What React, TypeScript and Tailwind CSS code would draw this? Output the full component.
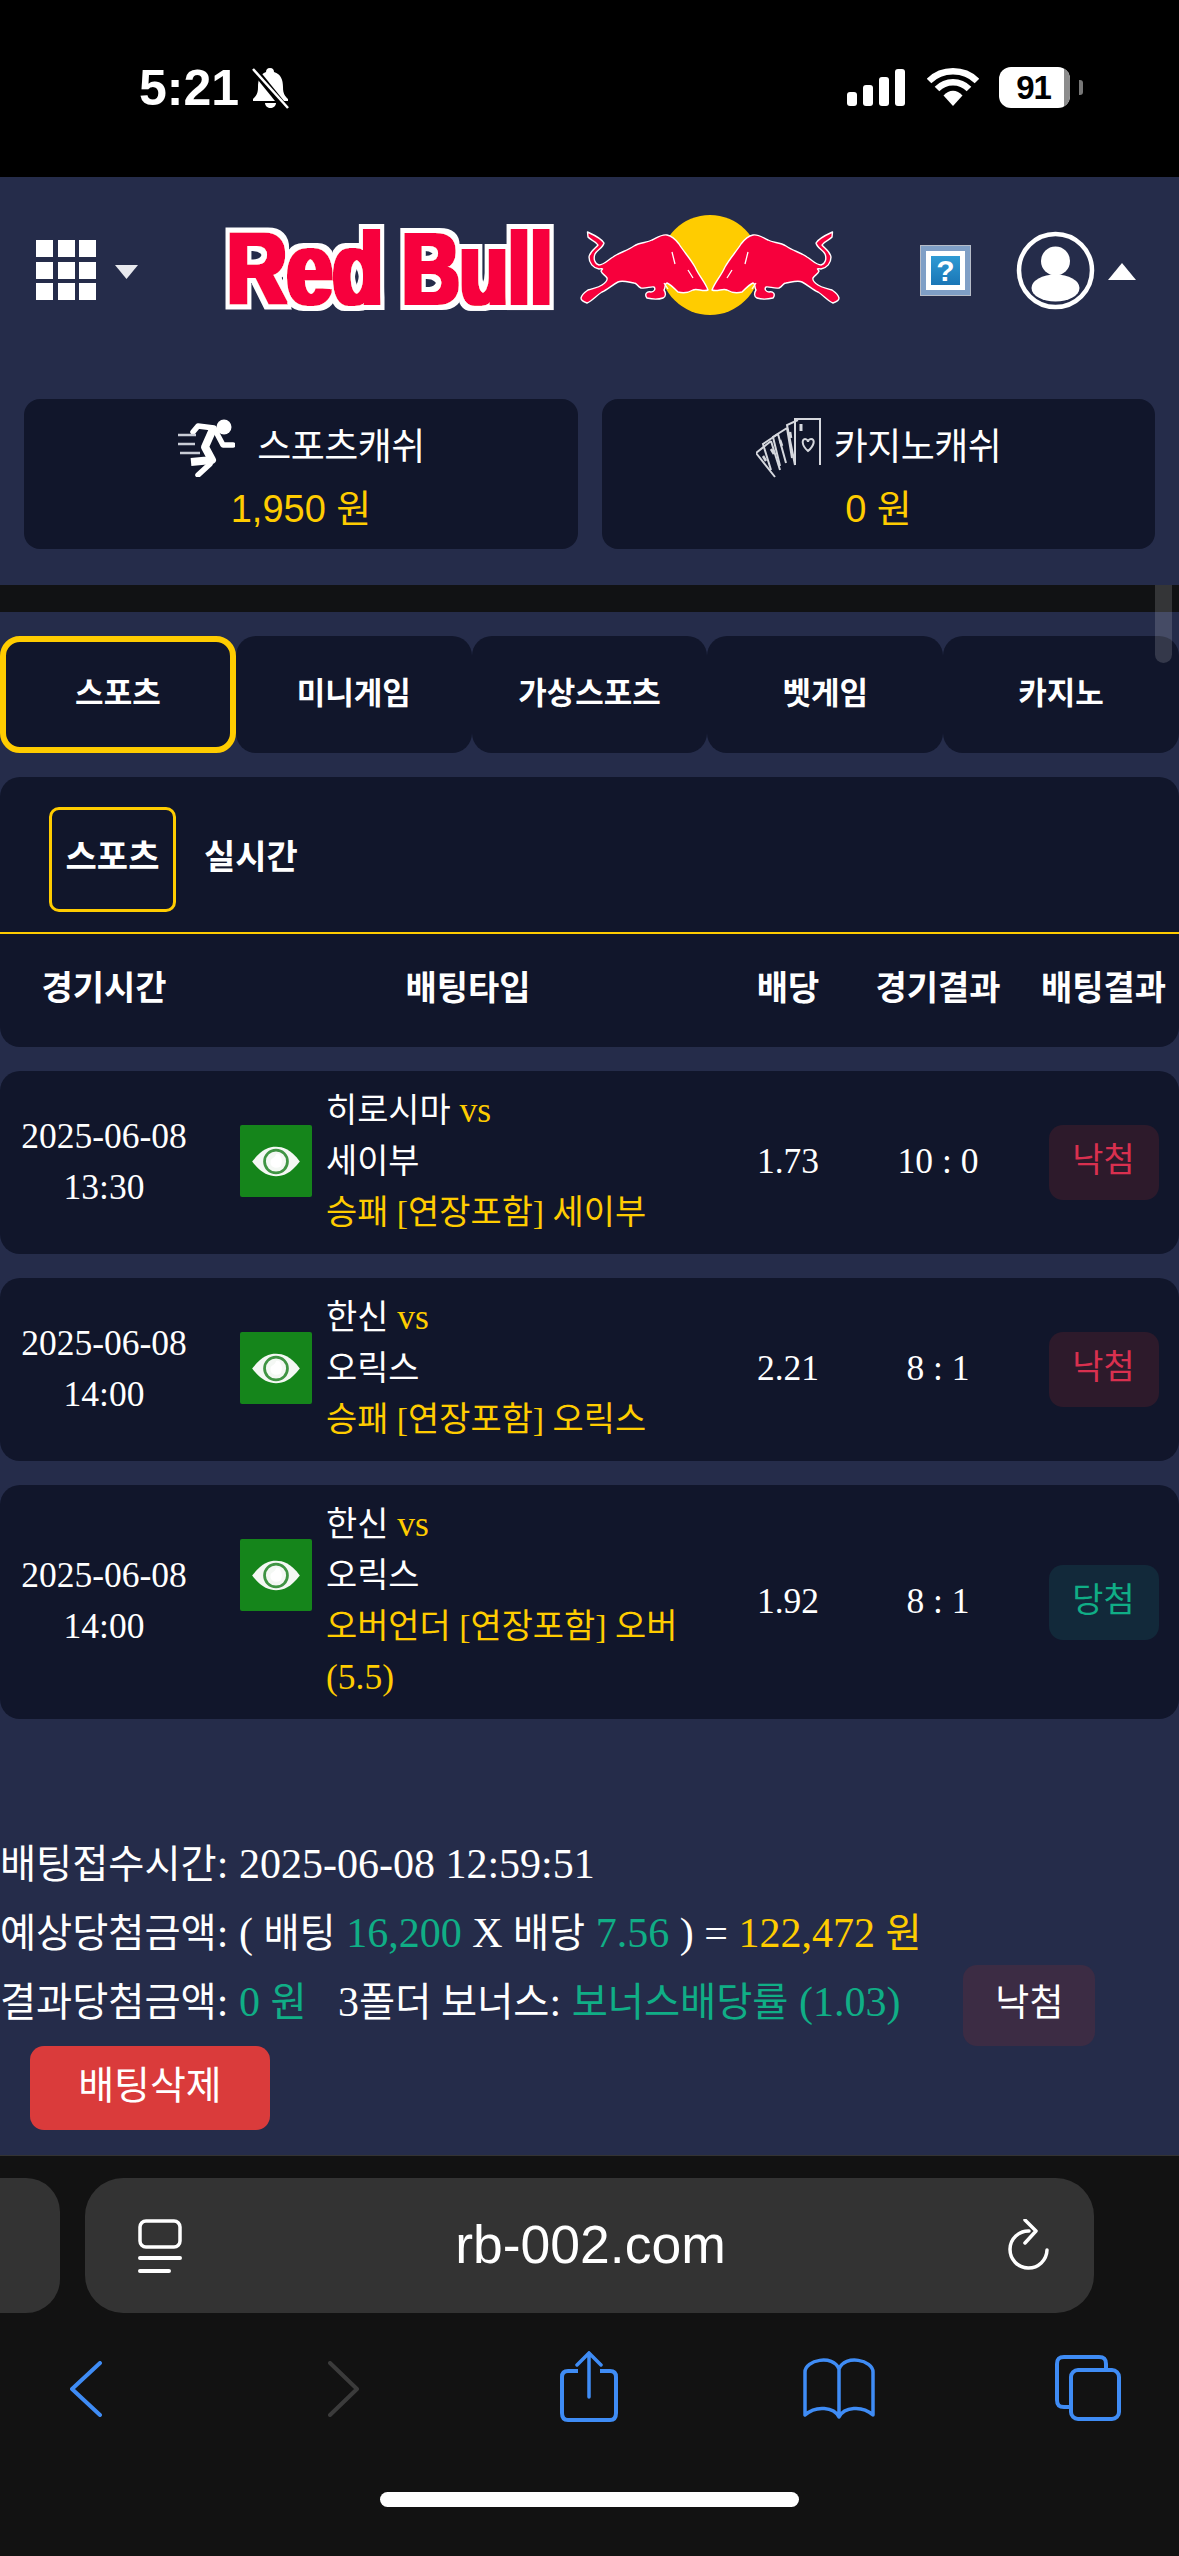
import React from "react";

const K = ({ children }: { children: React.ReactNode }) => <span className="text-[0.955em]">{children}</span>;
const KS = ({ children }: { children: React.ReactNode }) => <span className="text-[0.935em]">{children}</span>;

const Green = ({ children }: { children: React.ReactNode }) => <span className="text-[#10ae86]">{children}</span>;
const Yellow = ({ children }: { children: React.ReactNode }) => <span className="text-[#ffcc00]">{children}</span>;

const BULL =
  "M587.5 232 C594 235 601 238 604 243 C603 248 597 250 595 254 C593 259 595 264 599 265 C604 265 608 260 613 257 C620 252 627 251 634 246 C640 242 647 243 652 240 C658 237 662 234 667 235 C672 236 676 240 679 244 C684 252 690 258 695 267 C699 276 705 282 708 290 C703 292 697 288 693 290 C688 293 682 293 678 292 C674 288 670 284 667 283 C664 284 666 287 664 290 C666 293 666 297 663 298 C657 300 651 299 647 298 C644 294 647 291 651 292 C654 292 656 289 654 287 C651 286 646 289 641 288 C637 286 637 283 634 283 C628 282 622 280 618 282 C612 285 607 290 602 292 C597 295 592 301 587 303 C584 302 581 300 581 298 C582 294 585 292 588 290 C593 288 598 288 602 285 C605 283 608 281 607 278 C605 275 602 274 601 271 C603 269 604 268 599 269 C593 268 589 263 589 257 C590 251 596 248 598 245 C596 241 590 240 588 237 Z";

function Logo() {
  return (
    <svg width="620" height="110" viewBox="225 210 620 110" className="shrink-0 overflow-visible">
      <defs>
        <filter id="rb" x="-5%" y="-15%" width="110%" height="130%">
          <feMorphology in="SourceGraphic" operator="dilate" radius="2.5 1" result="red" />
          <feMorphology in="SourceAlpha" operator="dilate" radius="6.5 5.5" result="wa" />
          <feFlood floodColor="#ffffff" />
          <feComposite in2="wa" operator="in" result="white" />
          <feMerge>
            <feMergeNode in="white" />
            <feMergeNode in="red" />
          </feMerge>
        </filter>
      </defs>
      <g filter="url(#rb)" fill="#f7003c" fontFamily="'Liberation Sans', sans-serif" fontWeight="700" fontSize="102">
        <text transform="translate(227 304) scale(0.81 1)">Red</text>
        <text transform="translate(402 304) scale(0.78 1)">Bull</text>
      </g>
      <circle cx="710" cy="265" r="50" fill="#ffcc00" />
      <path d={BULL} fill="#f7003c" stroke="#ffffff" strokeWidth="1.4" strokeLinejoin="round" />
      <path d={BULL} fill="#f7003c" stroke="#ffffff" strokeWidth="1.4" strokeLinejoin="round" transform="translate(1420 0) scale(-1 1)" />
      <path d="M672 252 l3 12 M693 278 l-5 -8 M664 283 l4 6" stroke="#ffffff" strokeWidth="1.3" fill="none" />
      <path d="M748 252 l-3 12 M727 278 l5 -8 M756 283 l-4 6" stroke="#ffffff" strokeWidth="1.3" fill="none" />
    </svg>
  );
}

function EyeBadge() {
  return (
    <div className="w-[72px] h-[72px] bg-[#15851b] rounded-[2px] flex items-center justify-center">
      <svg width="52" height="33" viewBox="0 0 56 36">
        <path d="M2 18 C12 5 20 2 28 2 C36 2 44 5 54 18 C44 31 36 34 28 34 C20 34 12 31 2 18 Z" fill="#f4f8f4" />
        <circle cx="28" cy="18" r="12.5" fill="none" stroke="#3f9443" strokeWidth="3" />
        <path d="M22 19 C22 13 26 16 28 10 C30 9 33 10 33 13 C35 15 35 22 32 24 C28 26 22 24 22 19 Z" fill="#ffffff" />
      </svg>
    </div>
  );
}

type Row = { date: string; time: string; a: string; b: string; bet: React.ReactNode; odd: string; score: string; win: boolean };

const rows: Row[] = [
  { date: "2025-06-08", time: "13:30", a: "히로시마", b: "세이부", bet: "승패 [연장포함] 세이부", odd: "1.73", score: "10 : 0", win: false },
  { date: "2025-06-08", time: "14:00", a: "한신", b: "오릭스", bet: "승패 [연장포함] 오릭스", odd: "2.21", score: "8 : 1", win: false },
  { date: "2025-06-08", time: "14:00", a: "한신", b: "오릭스", bet: "오버언더 [연장포함] 오버", odd: "1.92", score: "8 : 1", win: true },
];

const cols = "grid grid-cols-[208px_118px_402px_120px_180px_151px]";

function Sportsicon() {
  return (
    <svg width="58" height="58" viewBox="180 418 58 58" className="shrink-0">
      <circle cx="227" cy="426" r="7.5" fill="#fff" />
      <path d="M196 431 L201 425 L217 427 L226 444 L236 444" fill="none" stroke="#fff" strokeWidth="5.5" strokeLinejoin="round" strokeLinecap="round" />
      <path d="M216 428 L208 446 L215 459 L194 461" fill="none" stroke="#fff" strokeWidth="8" strokeLinejoin="round" />
      <path d="M213 463 L201 474" fill="none" stroke="#fff" strokeWidth="5.5" strokeLinecap="round" />
      <path d="M181 434 H199 M181 443 H198 M183 452 H203" stroke="#c9ccd6" strokeWidth="2.6" />
    </svg>
  );
}

function CardsIcon() {
  return (
    <svg width="66" height="60" viewBox="756 418 66 60" className="shrink-0" fill="none" stroke="#d6d8de" strokeWidth="2">
      <path d="M775 477 L756 453 L771 441 M771 441 L780 470" />
      <path d="M771 470 L763 444 L778 434 M778 434 L786 463" />
      <path d="M780 466 L773 437 L787 428 M787 428 L792 458" />
      <path d="M795 465 L787 425 L798 420" />
      <path d="M795 465 V419 H820 V465" />
      <path d="M808 451 C801 445 802 439 805 439 C807 439 808 441 808 442 C808 441 809 439 811 439 C815 439 815 445 808 451 Z" />
      <path d="M801 424 v7" strokeWidth="3" />
      <path d="M790 432 l1 6 M780 440 l2 6 M771 449 l3 5 M763 456 l3 5" strokeWidth="2.6" />
    </svg>
  );
}

export default function App() {
  return (
    <div className="relative w-[1179px] h-[2556px] overflow-hidden bg-[#252c4a] text-white font-['Liberation_Serif','Noto_Sans_CJK_KR',serif] flex flex-col">
      {/* status bar */}
      <div className="h-[177px] bg-black shrink-0 flex items-start font-['Liberation_Sans','Noto_Sans_CJK_KR',sans-serif]">
        <div className="ml-[139px] mt-[59px] text-[50px] leading-[58px] font-bold w-[108px]">5:21</div>
        <svg width="42" height="42" viewBox="0 0 42 42" className="mt-[67px] ml-[3px]">
          <path d="M20 1 C23 1 24 3 24 5 C31 7 33 13 33 20 C33 27 35 29 38 32 L38 34 H3 V32 C6 29 8 27 8 20 C8 13 10 7 16 5 C16 3 17 1 20 1 Z M15 36 H26 C26 39 23 41 20.500 41 C18 41 15 39 15 36 Z" fill="#fff" />
          <path d="M2 0 L36 42" stroke="#000" strokeWidth="7" />
          <path d="M3 2 L38 41" stroke="#fff" strokeWidth="2.500" />
        </svg>
        <div className="ml-[555px] mt-[69px] flex items-end gap-[6px] h-[37px]">
          <div className="w-[10px] h-[14px] bg-white rounded-[3px]" />
          <div className="w-[10px] h-[21px] bg-white rounded-[3px]" />
          <div className="w-[10px] h-[29px] bg-white rounded-[3px]" />
          <div className="w-[10px] h-[37px] bg-white rounded-[3px]" />
        </div>
        <svg width="52" height="38" viewBox="0 0 52 38" className="ml-[22px] mt-[68px]">
          <path d="M2 13 C15 0 37 0 50 13" fill="none" stroke="#fff" strokeWidth="6.500" />
          <path d="M10 21 C19 12 33 12 42 21" fill="none" stroke="#fff" strokeWidth="6.500" />
          <path d="M16.500 27.500 C22 21 30 21 35.500 27.500 L26 38 Z" fill="#fff" />
        </svg>
        <div className="ml-[20px] mt-[67px] w-[71px] h-[41px] rounded-[12px] bg-white flex items-center justify-center text-black text-[33px] font-bold overflow-hidden relative">
          <span className="mr-[2px] tracking-[-1px]">91</span>
          <div className="absolute right-0 top-0 bottom-0 w-[6px] bg-[#8c8c8c]" />
        </div>
        <div className="ml-[9px] mt-[80px] w-[4px] h-[15px] rounded-r-[3px] bg-[#777]" />
      </div>

      {/* header */}
      <div className="h-[222px] shrink-0 flex items-start">
        <div className="ml-[36px] mt-[63px] grid grid-cols-3 gap-[4.500px] w-[60px] h-[60px]">
          {Array.from({ length: 9 }).map((_, i) => (
            <div key={i} className="bg-white" />
          ))}
        </div>
        <svg width="23" height="14" viewBox="0 0 23 14" className="ml-[19px] mt-[88px]">
          <path d="M0 0 H23 L11.500 14 Z" fill="#e8e9ee" />
        </svg>
        <div className="ml-[87px] mt-[33px]">
          <Logo />
        </div>
        <div className="ml-[75px] mt-[68px] w-[51px] h-[51px] border-[1.500px] border-[#b6bcc8] bg-[#7f9fc6] p-[5px] shrink-0">
          <div className="w-full h-full border-[5px] border-white bg-gradient-to-b from-[#2f9bd4] to-[#1a76b6] flex items-center justify-center text-[30px] leading-none font-['Liberation_Sans',sans-serif] font-bold">
            ?
          </div>
        </div>
        <svg width="80" height="80" viewBox="0 0 80 80" className="ml-[45px] mt-[54px] shrink-0">
          <circle cx="39.500" cy="39.500" r="36.500" fill="none" stroke="#fff" strokeWidth="4.500" />
          <circle cx="39.500" cy="30" r="14.500" fill="#fff" />
          <ellipse cx="39.500" cy="57" rx="24" ry="13.500" fill="#fff" />
        </svg>
        <svg width="28" height="17" viewBox="0 0 28 17" className="ml-[12px] mt-[86px] shrink-0">
          <path d="M14 0 L28 17 H0 Z" fill="#fff" />
        </svg>
      </div>

      {/* cash cards */}
      <div className="flex gap-[24px] pl-[24px] pr-[24px] font-['Liberation_Sans','Noto_Sans_CJK_KR',sans-serif] shrink-0">
        <div className="w-[554px] h-[150px] rounded-[16px] bg-[#11162b] flex flex-col items-center pt-[19px]">
          <div className="flex items-center h-[60px] text-[37px]">
            <Sportsicon />
            <span className="ml-[22px] tracking-[-0.5px]">스포츠캐쉬</span>
          </div>
          <div className="text-[38px] leading-[44px] text-[#ffcc00] mt-[9px]">1,950 원</div>
        </div>
        <div className="w-[553px] h-[150px] rounded-[16px] bg-[#11162b] flex flex-col items-center pt-[19px]">
          <div className="flex items-center h-[60px] text-[37px]">
            <CardsIcon />
            <span className="ml-[12px] tracking-[-0.5px]">카지노캐쉬</span>
          </div>
          <div className="text-[38px] leading-[44px] text-[#ffcc00] mt-[9px]">0 원</div>
        </div>
      </div>

      {/* dark band */}
      <div className="mt-[36px] h-[27px] bg-[#111214] shrink-0" />

      {/* tabs */}
      <div className="mt-[24px] grid grid-cols-5 h-[117px] shrink-0 font-bold text-[31px] font-['Liberation_Sans','Noto_Sans_CJK_KR',sans-serif]">
        <div className="rounded-[20px] border-[6px] border-[#ffcc00] bg-[#11162b] flex items-center justify-center">스포츠</div>
        {["미니게임", "가상스포츠", "벳게임", "카지노"].map((t) => (
          <div key={t} className="rounded-[20px] bg-[#11162b] flex items-center justify-center">
            {t}
          </div>
        ))}
      </div>

      {/* sub tabs + table header */}
      <div className="mt-[24px] h-[270px] rounded-[20px] bg-[#11162b] shrink-0 flex flex-col font-bold text-[34px]">
        <div className="h-[157px] border-b-[2.500px] border-[#ffcc00] flex items-start pl-[49px] pt-[30px]">
          <div className="w-[127px] h-[105px] border-[3px] border-[#ffcc00] rounded-[10px] flex items-center justify-center pb-[4px]">스포츠</div>
          <div className="ml-[28px] h-[105px] flex items-center pb-[4px]">실시간</div>
        </div>
        <div className={`${cols} pt-[32px] leading-[46px] text-center text-[34px]`}>
          <div>경기시간</div>
          <div className="col-span-2">배팅타입</div>
          <div>배당</div>
          <div>경기결과</div>
          <div>배팅결과</div>
        </div>
      </div>

      {/* bet rows */}
      <div className="mt-[24px] flex flex-col gap-[24px] shrink-0 text-[35.500px] leading-[51px]">
        {rows.map((r, i) => (
          <div key={i} className={`${cols} rounded-[20px] bg-[#11162b] items-center pt-[14px] pb-[16px]`}>
            <div className="text-center">
              {r.date}
              <br />
              {r.time}
            </div>
            <div className="self-start pl-[32px] pt-[40px]">
              <EyeBadge />
            </div>
            <div>
              <div>
                <K>{r.a}</K> <Yellow>vs</Yellow>
              </div>
              <div>
                <K>{r.b}</K>
              </div>
              <div className="text-[#ffcc00]">
                <K>{r.bet}</K>
                {r.win ? " (5.5)" : ""}
              </div>
            </div>
            <div className="text-center">{r.odd}</div>
            <div className="text-center">{r.score}</div>
            <div className="flex justify-center">
              <div className={`mt-[2px] w-[110px] h-[75px] rounded-[14px] flex items-center justify-center pb-[4px] ${r.win ? "bg-[#12293a] text-[#10ae86]" : "bg-[#2d1a2b] text-[#d9304f]"}`}>
                <K>{r.win ? "당첨" : "낙첨"}</K>
              </div>
            </div>
          </div>
        ))}
      </div>

      {/* summary */}
      <div className="mt-[111px] text-[42px] leading-[68px] shrink-0">
        <div>
          <KS>배팅접수시간</KS>: 2025-06-08 12:59:51
        </div>
        <div>
          <KS>예상당첨금액</KS>: ( <KS>배팅</KS> <Green>16,200</Green> X <KS>배당</KS> <Green>7.56</Green> ) = <Yellow>122,472 <KS>원</KS></Yellow>
        </div>
        <div className="flex items-start h-[78px]">
          <div className="whitespace-pre">
            <KS>결과당첨금액</KS>: <Green>0 <KS>원</KS></Green>{"\u00a0\u00a0\u00a0"}3<KS>폴더 보너스</KS>: <Green><KS>보너스배당률</KS> (1.03)</Green>
          </div>
          <div className="ml-[63px] mt-[-3px] w-[132px] h-[81px] rounded-[14px] bg-[#3c2c44] flex items-center justify-center text-[37px] pb-[4px] shrink-0">낙첨</div>
        </div>
        <div className="ml-[30px] w-[240px] h-[84px] rounded-[14px] bg-[#da3b3b] flex items-center justify-center text-[39px] pb-[4px]">배팅삭제</div>
      </div>

      {/* safari chrome */}
      <div className="absolute left-0 right-0 bottom-0 h-[401px] bg-[#121212] border-t border-[#333] flex flex-col">
        <div className="mt-[22px] flex h-[135px] shrink-0">
          <div className="w-[60px] rounded-r-[34px] bg-[#333333]" />
          <div className="ml-[25px] w-[1009px] rounded-[38px] bg-[#333333] flex items-center pl-[53px] pr-[44px]">
            <svg width="44" height="54" viewBox="0 0 44 54" className="shrink-0">
              <rect x="2" y="2" width="40" height="26" rx="6" fill="none" stroke="#fff" strokeWidth="3.500" />
              <path d="M2 39 H42 M2 52 H31" stroke="#fff" strokeWidth="4" strokeLinecap="round" />
            </svg>
            <div className="flex-1 text-center text-[53.500px] leading-none pb-[2px] pr-[9px] font-['Liberation_Sans',sans-serif]">rb-002.com</div>
            <svg width="42" height="54" viewBox="0 0 42 54" className="shrink-0">
              <path d="M21 12 A18.500 18.500 0 1 0 39 31" fill="none" stroke="#fff" strokeWidth="3.500" strokeLinecap="round" />
              <path d="M17 1 L28 12 L17 24" fill="none" stroke="#fff" strokeWidth="3.500" strokeLinecap="round" strokeLinejoin="round" />
            </svg>
          </div>
        </div>
        <div className="mt-[38px] flex items-start h-[72px] shrink-0">
          <svg width="32" height="56" viewBox="0 0 32 56" className="ml-[70px] mt-[10px]">
            <path d="M30 2 L2 28 L30 54" fill="none" stroke="#3f8cf5" strokeWidth="4" strokeLinecap="round" strokeLinejoin="round" />
          </svg>
          <svg width="32" height="56" viewBox="0 0 32 56" className="ml-[226px] mt-[10px]">
            <path d="M2 2 L29 28 L2 54" fill="none" stroke="#3b3b3b" strokeWidth="4" strokeLinecap="round" strokeLinejoin="round" />
          </svg>
          <svg width="58" height="72" viewBox="0 0 58 72" className="ml-[200px]">
            <path d="M18 20 H8 C4 20 2 22 2 26 V62 C2 67 4 69 8 69 H50 C54 69 56 67 56 62 V26 C56 22 54 20 50 20 H40" fill="none" stroke="#3f8cf5" strokeWidth="4" />
            <path d="M29 46 V2 M17 14 L29 2 L41 14" fill="none" stroke="#3f8cf5" strokeWidth="3.500" strokeLinecap="round" />
          </svg>
          <svg width="72" height="62" viewBox="0 0 72 62" className="ml-[185px] mt-[6px]">
            <path d="M36 60 C31 50 13 48 2 58 V15 C2 3 30 -3 36 12 C42 -3 70 3 70 15 V58 C59 48 41 50 36 60 Z M36 12 V60" fill="none" stroke="#3f8cf5" strokeWidth="3.500" strokeLinejoin="round" />
          </svg>
          <svg width="66" height="66" viewBox="0 0 66 66" className="ml-[180px] mt-[4px]">
            <path d="M14 52 H9 C4 52 2 50 2 45 V9 C2 4 4 2 9 2 H44 C49 2 51 4 51 9 V14" fill="none" stroke="#3f8cf5" strokeWidth="4" />
            <rect x="16" y="15" width="48" height="49" rx="7" fill="#121212" stroke="#3f8cf5" strokeWidth="4" />
          </svg>
        </div>
        <div className="mt-[69px] mx-auto w-[419px] h-[15px] rounded-full bg-white shrink-0" />
      </div>

      {/* scrollbar overlay */}
      <div className="absolute left-[1155px] top-[585px] w-[17px] h-[78px] rounded-b-[9px] bg-white/15" />
    </div>
  );
}
